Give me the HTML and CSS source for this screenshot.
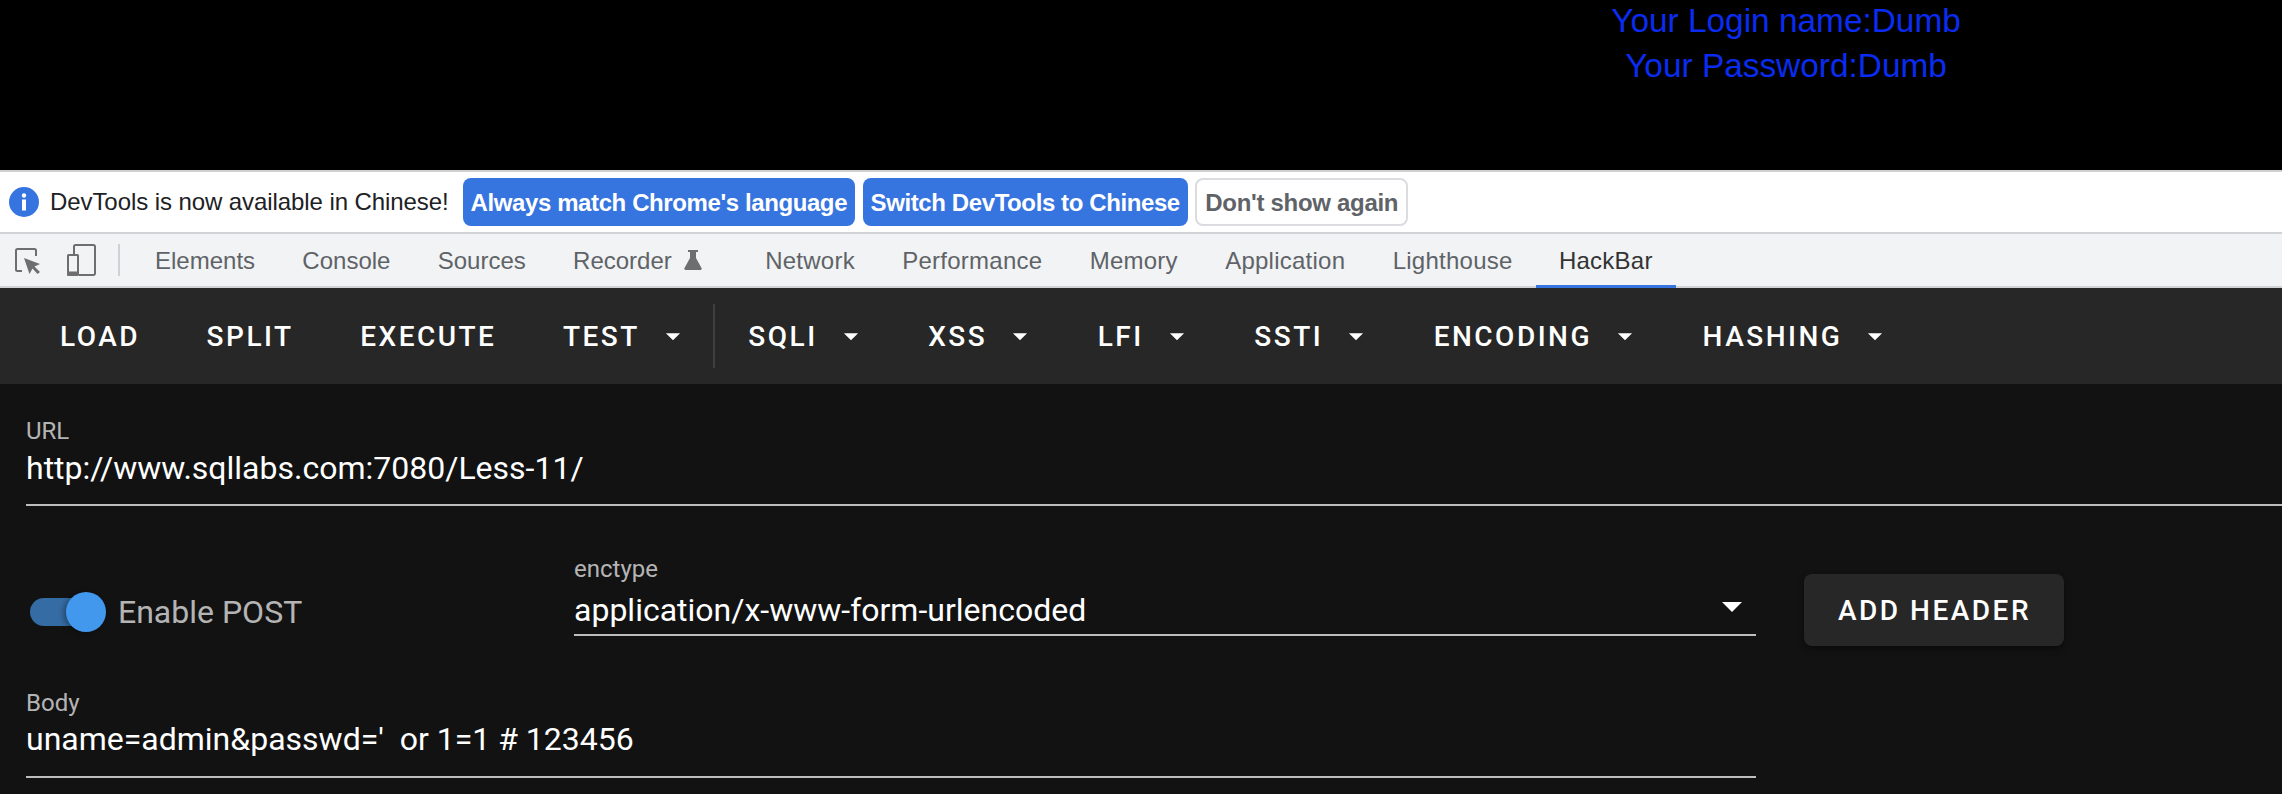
FILE: index.html
```html
<!DOCTYPE html>
<html lang="en">
<head>
<meta charset="utf-8">
<title>HackBar</title>
<link rel="stylesheet" href="styles.css">
</head>
<body>
<div class="page">
  <div class="site">
    <div class="site-text">
      <div>Your Login name:Dumb</div>
      <div>Your Password:Dumb</div>
    </div>
  </div>
  <div class="infobar">
    <svg class="info-icon" viewBox="0 0 30 30"><circle cx="15" cy="15" r="15" fill="#3674e0"/><circle cx="15" cy="8.500" r="2.200" fill="#fff"/><rect x="13" y="12.500" width="4" height="11" fill="#fff"/></svg>
    <span class="info-text">DevTools is now available in Chinese!</span>
    <span class="ibtn primary">Always match Chrome's language</span>
    <span class="ibtn primary">Switch DevTools to Chinese</span>
    <span class="ibtn plain">Don't show again</span>
  </div>
  <div class="tabbar">
    <svg class="tool-icon inspect" viewBox="0 0 26 26"><path d="M7 23H2.500A1.500 1.500 0 0 1 1 21.500V2.500A1.500 1.500 0 0 1 2.500 1h17A1.500 1.500 0 0 1 21 2.500V8" fill="none" stroke="#6e6e6e" stroke-width="2"/><path d="M9 10l16 6-5.500 2.500 5.500 5.500-2.500 2-5-5.500-3 5.500z" fill="#6e6e6e"/></svg>
    <svg class="tool-icon device" viewBox="0 0 29 32"><path d="M7 10V2.500A1.500 1.500 0 0 1 8.500 1h18A1.500 1.500 0 0 1 28 2.500v27a1.500 1.500 0 0 1-1.500 1.500H12" fill="none" stroke="#6e6e6e" stroke-width="2"/><path fill-rule="evenodd" d="M1.500 10h9a1.500 1.500 0 0 1 1.500 1.500V31a1 1 0 0 1-1 1H1a1 1 0 0 1-1-1V11.500A1.500 1.500 0 0 1 1.500 10zM2 12v15.500h8V12z" fill="#6e6e6e"/></svg>
    <span class="tool-sep"></span>
    <div class="tabs">
      <span class="tab">Elements</span>
      <span class="tab">Console</span>
      <span class="tab">Sources</span>
      <span class="tab">Recorder<svg class="flask" viewBox="0 0 18 20"><path d="M4 0h10v2h-2v6l5.500 10a1.300 1.300 0 0 1-1.200 2H1.700a1.300 1.300 0 0 1-1.200-2L6 8V2H4z" fill="#6e6e6e"/></svg></span>
      <span class="tab wide">Network</span>
      <span class="tab wide">Performance</span>
      <span class="tab wide">Memory</span>
      <span class="tab wide">Application</span>
      <span class="tab wide">Lighthouse</span>
      <span class="tab wide active">HackBar</span>
    </div>
  </div>
  <div class="menu">
    <span class="mbtn">LOAD</span>
    <span class="mbtn">SPLIT</span>
    <span class="mbtn">EXECUTE</span>
    <span class="mbtn drop">TEST<svg class="caret" viewBox="0 0 24 24"><path d="M7 10l5 5 5-5z"/></svg></span>
    <span class="menu-sep"></span>
    <span class="mbtn drop">SQLI<svg class="caret" viewBox="0 0 24 24"><path d="M7 10l5 5 5-5z"/></svg></span>
    <span class="mbtn drop">XSS<svg class="caret" viewBox="0 0 24 24"><path d="M7 10l5 5 5-5z"/></svg></span>
    <span class="mbtn drop">LFI<svg class="caret" viewBox="0 0 24 24"><path d="M7 10l5 5 5-5z"/></svg></span>
    <span class="mbtn drop">SSTI<svg class="caret" viewBox="0 0 24 24"><path d="M7 10l5 5 5-5z"/></svg></span>
    <span class="mbtn drop">ENCODING<svg class="caret" viewBox="0 0 24 24"><path d="M7 10l5 5 5-5z"/></svg></span>
    <span class="mbtn drop">HASHING<svg class="caret" viewBox="0 0 24 24"><path d="M7 10l5 5 5-5z"/></svg></span>
  </div>
  <div class="panel">
    <div class="field url-field">
      <div class="flabel">URL</div>
      <div class="fvalue url-value">http://www.sqllabs.com:7080/Less-11/</div>
    </div>
    <div class="post-row">
      <div class="switch"><span class="track"></span><span class="thumb"></span></div>
      <span class="switch-label">Enable POST</span>
      <div class="field enctype">
        <div class="flabel">enctype</div>
        <div class="fvalue select">application/x-www-form-urlencoded<svg class="sel-caret" viewBox="0 0 24 24"><path d="M7 10l5 5 5-5z"/></svg></div>
      </div>
      <span class="add-header">ADD HEADER</span>
    </div>
    <div class="field body-field">
      <div class="flabel">Body</div>
      <div class="fvalue body-value">uname=admin&amp;passwd='&nbsp; or 1=1 # 123456</div>
    </div>
  </div>
</div>
</body>
</html>
```
FILE: styles.css
```css
* { box-sizing: border-box; }
html, body { margin: 0; padding: 0; }
body { width: 2282px; height: 794px; overflow: hidden; background: #121212; }
.page { display: flex; flex-direction: column; height: 794px; }

.site { height: 170px; background: #000; display: flex; justify-content: center; padding-left: 1290px; }
.site-text { color: #0a2cf0; font: 33.4px/45px "Liberation Sans", Arial, sans-serif; text-align: center; white-space: nowrap; margin-top: -2px; }

.infobar { height: 64px; background: #fff; border-top: 2px solid #d0d0d0; border-bottom: 2px solid #d0d2d6; display: flex; align-items: center; padding-left: 9px; font: 24px "Liberation Sans", Arial, sans-serif; white-space: nowrap; }
.info-icon { width: 30px; height: 30px; flex: none; }
.info-text { color: #202124; margin-left: 11px; margin-right: 14px; letter-spacing: -0.08px; }
.ibtn { height: 48px; border-radius: 8px; display: flex; align-items: center; padding: 1px 8px 0; margin-right: 7.5px; font-weight: 700; letter-spacing: -0.4px; }
.primary { background: #3674e0; color: #fff; }
.plain { background: #fff; color: #5f6368; border: 2px solid #dadce0; padding: 1px 8px 0; letter-spacing: -0.3px; }

.tabbar { height: 54px; background: #f1f3f4; border-bottom: 2px solid #d0d2d6; display: flex; align-items: center; font: 24px "Liberation Sans", Arial, sans-serif; color: #5f6368; white-space: nowrap; }
.tool-icon { flex: none; }
.inspect { width: 26px; height: 26px; margin-left: 15px; margin-top: 2px; }
.device { width: 29px; height: 32px; margin-left: 26px; }
.tool-sep { width: 2px; height: 32px; background: #cfd1d4; margin-left: 22px; }
.tabs { display: flex; align-self: stretch; margin-left: 11px; margin-bottom: -2px; }
.tab { display: flex; align-items: center; padding: 0 24px; margin-right: -0.7px; }
.wide { letter-spacing: 0.25px; }
.flask { width: 18px; height: 20px; margin-left: 12px; margin-right: 16px; margin-top: -2px; }
.active { color: #333; box-shadow: inset 0 -3px 0 #3674e0; margin-right: 0; padding: 0 23px; }

.menu { height: 96px; background: #272727; display: flex; align-items: center; padding-left: 27px; font: 500 28px Roboto, sans-serif; letter-spacing: 2.5px; color: #fff; white-space: nowrap; }
.mbtn { display: flex; align-items: center; padding: 0 33.5px 0 33px; height: 72px; }
.drop { padding-right: 27.5px; }
.caret { width: 34px; height: 34px; margin-left: 16px; fill: #fff; flex: none; }
.menu-sep { width: 2px; height: 64px; background: #3f3f3f; margin-left: -4.5px; margin-right: 0.5px; }

.panel { flex: 1; background: #121212; padding: 0 0 0 26px; font-family: Roboto, sans-serif; color: #fff; }
.field { display: flex; flex-direction: column; border-bottom: 2px solid #bdbdbd; }
.flabel { font-size: 24px; line-height: 28px; color: rgba(255,255,255,.7); }
.fvalue { font-size: 32px; line-height: 48px; }
.url-field { height: 122px; padding-top: 33px; }
.url-value { margin-top: -1px; }
.post-row { display: flex; align-items: flex-start; margin-top: 47px; height: 93px; }
.switch { position: relative; width: 76px; height: 40px; margin-left: 4px; margin-top: 39px; flex: none; }
.track { position: absolute; left: 0; top: 6px; width: 72px; height: 28px; border-radius: 14px; background: #356ca3; }
.thumb { position: absolute; right: 0; top: 0; width: 40px; height: 40px; border-radius: 50%; background: #4298ec; box-shadow: -3px 1px 5px rgba(0,0,0,.3); }
.switch-label { font-size: 32px; color: rgba(255,255,255,.7); margin-left: 12px; margin-top: 37px; line-height: 44px; width: 456px; flex: none; }
.enctype { width: 1182px; height: 83px; flex: none; padding-top: 2px; }
.select { display: flex; justify-content: space-between; margin-top: 3px; }
.sel-caret { width: 48px; height: 48px; fill: #fff; margin-top: -4px; flex: none; }
.add-header { height: 72px; margin-left: 48px; margin-top: 21px; background: #272727; border-radius: 8px; font-weight: 500; font-size: 28px; letter-spacing: 2.5px; display: flex; align-items: center; padding: 0 33px 0 34px; box-shadow: 0 3px 6px rgba(0,0,0,.4); white-space: nowrap; }
.body-field { width: 1730px; height: 89px; margin-top: 43px; }
.body-value { margin-top: -2px; }
```
